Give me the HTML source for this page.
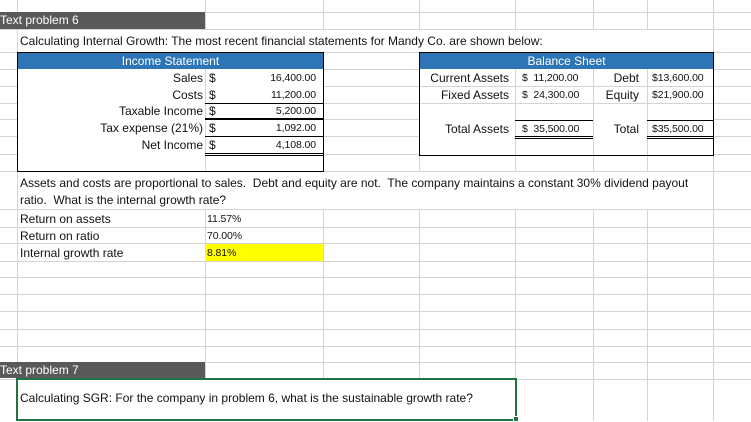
<!DOCTYPE html>
<html><head><style>
*{margin:0;padding:0;box-sizing:border-box}
body{width:751px;height:421px;overflow:hidden;background:#fff;position:relative;font-family:"Liberation Sans",sans-serif;color:#111}
.h{position:absolute;left:0;width:751px;height:1px;background:#d4d4d4}
.v{position:absolute;top:0;height:421px;width:1px;background:#d4d4d4}
.w{position:absolute;background:#fff}
.t{position:absolute;font-size:12px;white-space:nowrap;line-height:16px}
.n{position:absolute;font-size:10.5px;white-space:nowrap;line-height:16px;letter-spacing:-0.1px}
.bk{position:absolute;background:#000}
.blue{position:absolute;background:#2e75b6;color:#fff;font-size:12px;text-align:center;line-height:16px}
</style></head><body>
<div class="h" style="top:12px"></div><div class="h" style="top:29px"></div><div class="h" style="top:52px"></div>
<div class="h" style="top:69px"></div><div class="h" style="top:86px"></div><div class="h" style="top:103px"></div>
<div class="h" style="top:119px"></div><div class="h" style="top:136px"></div><div class="h" style="top:154px"></div>
<div class="h" style="top:171px"></div><div class="h" style="top:209px"></div><div class="h" style="top:227px"></div>
<div class="h" style="top:243px"></div><div class="h" style="top:261px"></div><div class="h" style="top:277px"></div>
<div class="h" style="top:294px"></div><div class="h" style="top:311px"></div><div class="h" style="top:329px"></div>
<div class="h" style="top:346px"></div><div class="h" style="top:362px"></div><div class="h" style="top:379px"></div>
<div class="v" style="left:17px"></div><div class="v" style="left:205px"></div><div class="v" style="left:323px"></div>
<div class="v" style="left:419px"></div><div class="v" style="left:515px"></div><div class="v" style="left:593px"></div>
<div class="v" style="left:647px"></div><div class="v" style="left:713px"></div>

<div style="position:absolute;left:0;top:12px;width:205px;height:17px;background:#595959;color:#fff;font-size:12px;line-height:17px">Text problem 6</div>
<div class="w" style="left:18px;top:30px;width:695px;height:22px"></div>
<div class="t" style="left:20px;top:33px">Calculating Internal Growth: The most recent financial statements for Mandy Co. are shown below:</div>

<div class="w" style="left:18px;top:53px;width:305px;height:118px"></div>
<div style="position:absolute;left:205px;top:69px;width:1px;height:102px;background:#d4d4d4"></div>
<div style="position:absolute;left:17px;top:52px;width:307px;height:120px;border:1px solid #000"></div>
<div class="blue" style="left:18px;top:53px;width:305px;height:16px">Income Statement</div>
<div class="t" style="right:548px;top:70px">Sales</div><div class="t" style="left:209px;top:70px">$</div><div class="n" style="right:435px;top:70px">16,400.00</div>
<div class="t" style="right:548px;top:87px">Costs</div><div class="t" style="left:209px;top:87px">$</div><div class="n" style="right:435px;top:87px">11,200.00</div>
<div class="t" style="right:548px;top:103px">Taxable Income</div><div class="t" style="left:209px;top:103px">$</div><div class="n" style="right:435px;top:103px">5,200.00</div>
<div class="t" style="right:548px;top:120px">Tax expense (21%)</div><div class="t" style="left:209px;top:120px">$</div><div class="n" style="right:435px;top:120px">1,092.00</div>
<div class="t" style="right:548px;top:137px">Net Income</div><div class="t" style="left:209px;top:137px">$</div><div class="n" style="right:435px;top:137px">4,108.00</div>
<div class="bk" style="left:205px;top:103px;width:118px;height:1px"></div>
<div class="bk" style="left:205px;top:118px;width:118px;height:2px"></div>
<div class="bk" style="left:205px;top:136px;width:118px;height:1px"></div>
<div class="bk" style="left:205px;top:153px;width:118px;height:1px"></div>
<div class="bk" style="left:205px;top:155px;width:118px;height:1px"></div>

<div class="w" style="left:420px;top:53px;width:293px;height:102px"></div>
<div style="position:absolute;left:515px;top:69px;width:1px;height:86px;background:#d4d4d4"></div>
<div style="position:absolute;left:593px;top:69px;width:1px;height:86px;background:#d4d4d4"></div>
<div style="position:absolute;left:647px;top:69px;width:1px;height:86px;background:#d4d4d4"></div>
<div style="position:absolute;left:419px;top:86px;width:294px;height:1px;background:#d4d4d4"></div>
<div style="position:absolute;left:419px;top:103px;width:294px;height:1px;background:#d4d4d4"></div>
<div style="position:absolute;left:419px;top:52px;width:295px;height:104px;border:1px solid #000"></div>
<div class="blue" style="left:420px;top:53px;width:293px;height:16px">Balance Sheet</div>
<div class="t" style="right:242px;top:70px">Current Assets</div><div class="n" style="left:522px;top:70px">$&nbsp;&nbsp;11,200.00</div>
<div class="t" style="right:112px;top:70px">Debt</div><div class="n" style="left:652px;top:70px">$13,600.00</div>
<div class="t" style="right:242px;top:87px">Fixed Assets</div><div class="n" style="left:522px;top:87px">$&nbsp;&nbsp;24,300.00</div>
<div class="t" style="right:112px;top:87px">Equity</div><div class="n" style="left:652px;top:87px">$21,900.00</div>
<div class="t" style="right:242px;top:121px">Total Assets</div><div class="n" style="left:522px;top:121px">$&nbsp;&nbsp;35,500.00</div>
<div class="t" style="right:112px;top:121px">Total</div><div class="n" style="left:652px;top:121px">$35,500.00</div>
<div class="bk" style="left:515px;top:120px;width:78px;height:1px"></div>
<div class="bk" style="left:647px;top:120px;width:66px;height:1px"></div>
<div class="bk" style="left:515px;top:136px;width:78px;height:1px"></div>
<div class="bk" style="left:515px;top:138px;width:78px;height:1px"></div>
<div class="bk" style="left:647px;top:136px;width:66px;height:1px"></div>
<div class="bk" style="left:647px;top:138px;width:66px;height:1px"></div>

<div class="w" style="left:18px;top:172px;width:695px;height:37px"></div>
<div class="t" style="left:20px;top:175px">Assets and costs are proportional to sales.&nbsp; Debt and equity are not.&nbsp; The company maintains a constant 30% dividend payout</div>
<div class="t" style="left:20px;top:192px">ratio.&nbsp; What is the internal growth rate?</div>
<div class="t" style="left:20px;top:211px">Return on assets</div><div class="n" style="left:207px;top:211px">11.57%</div>
<div class="t" style="left:20px;top:228px">Return on ratio</div><div class="n" style="left:207px;top:228px">70.00%</div>
<div style="position:absolute;left:205px;top:244px;width:118px;height:17px;background:#ffff00"></div>
<div class="t" style="left:20px;top:245px">Internal growth rate</div><div class="n" style="left:207px;top:245px">8.81%</div>

<div style="position:absolute;left:0;top:362px;width:205px;height:16px;background:#595959;color:#fff;font-size:12px;line-height:17px">Text problem 7</div>
<div class="w" style="left:17px;top:378px;width:500px;height:43px"></div>
<div style="position:absolute;left:16px;top:378px;width:501px;height:43px;border:2px solid #217346"></div>
<div style="position:absolute;left:513px;top:416px;width:6px;height:6px;background:#217346;border:1px solid #fff"></div>
<div class="t" style="left:20px;top:390px">Calculating SGR: For the company in problem 6, what is the sustainable growth rate?</div>
</body></html>
